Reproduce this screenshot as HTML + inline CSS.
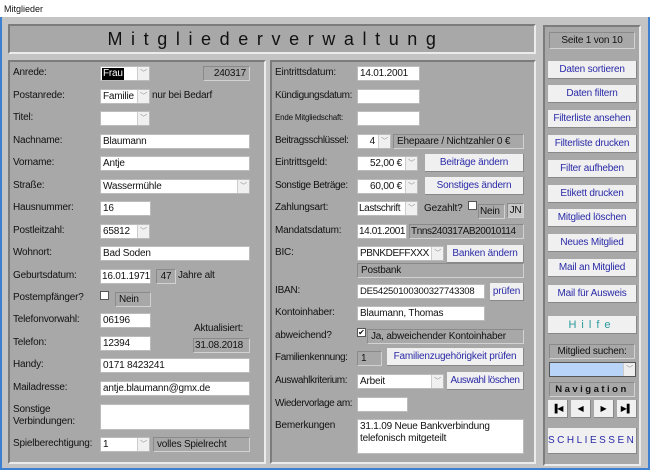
<!DOCTYPE html>
<html><head><meta charset="utf-8"><style>
*{box-sizing:border-box;margin:0;padding:0}
body{width:650px;height:470px;overflow:hidden;background:#c4c4c4;font-family:"Liberation Sans",sans-serif;font-size:10px;color:#111;position:relative}
div,span{position:absolute}
.tb{left:0;top:0;width:650px;height:17px;background:#fff;font-size:9px;padding:4px 0 0 4px}
.bl{left:0;top:17px;width:2px;height:453px;background:#3d7fd0}
.br{left:648px;top:17px;width:2px;height:453px;background:#3d7fd0}
.bb{left:0;top:468px;width:650px;height:2px;background:#3d7fd0}
.p{background:#a8a8a8;border-top:2px solid #7c7c7c;border-left:2px solid #7c7c7c;border-right:2px solid #ececec;border-bottom:2px solid #ececec}
.l{white-space:nowrap;line-height:12px;letter-spacing:-0.2px}
.f{background:#fff;height:15px;line-height:14px;padding-left:2px;white-space:nowrap;overflow:hidden;border:1px solid #bbb;letter-spacing:-0.2px}
.g{background:#a8a8a8;height:15px;line-height:13px;padding-left:3px;border:1px solid #d2d2d2;border-top-color:#8a8a8a;border-left-color:#8a8a8a;white-space:nowrap;overflow:hidden;letter-spacing:-0.2px}
.d{width:12px;height:13px;top:0;right:0;background:#f0f0f0;border-left:1px solid #ccc;color:#888;font-size:7px;text-align:center;line-height:13px}
.b{background:#f0f0f0;height:18px;line-height:18px;text-align:center;color:#2a2aa8;border-bottom:1px solid #888;border-right:1px solid #888;white-space:nowrap;font-size:10px;letter-spacing:-0.2px}
.cb{width:9px;height:9px;background:#fff;border:1px solid #555}
</style></head><body>
<div class="tb">Mitglieder</div>
<div class="bl"></div><div class="br"></div><div class="bb"></div>

<div class="p" style="left:8px;top:24px;width:528px;height:30px;font-size:18px;letter-spacing:8.6px;text-align:center;line-height:26px;padding-left:8px">Mitgliederverwaltung</div>

<!-- left panel -->
<div class="p" style="left:8px;top:60px;width:258px;height:404px"></div>
<div class="l" style="left:13px;top:67px">Anrede:</div>
<div class="f" style="left:100px;top:66px;width:50px"><span style="left:1px;top:1px;background:#000;color:#fff;line-height:12px;padding:0 1px">Frau</span><div class="d">﹀</div></div>
<div class="g" style="left:203px;top:66px;width:47px;text-align:right;padding-right:3px">240317</div>
<div class="l" style="left:13px;top:90px">Postanrede:</div>
<div class="f" style="left:100px;top:89px;width:50px">Familie<div class="d">﹀</div></div>
<div class="l" style="left:152px;top:90px">nur bei Bedarf</div>
<div class="l" style="left:13px;top:112px">Titel:</div>
<div class="f" style="left:100px;top:111px;width:50px"><div class="d">﹀</div></div>
<div class="l" style="left:13px;top:135px">Nachname:</div>
<div class="f" style="left:100px;top:134px;width:150px">Blaumann</div>
<div class="l" style="left:13px;top:157px">Vorname:</div>
<div class="f" style="left:100px;top:156px;width:150px">Antje</div>
<div class="l" style="left:13px;top:180px">Straße:</div>
<div class="f" style="left:100px;top:179px;width:150px">Wassermühle<div class="d">﹀</div></div>
<div class="l" style="left:13px;top:202px">Hausnummer:</div>
<div class="f" style="left:100px;top:201px;width:51px">16</div>
<div class="l" style="left:13px;top:225px">Postleitzahl:</div>
<div class="f" style="left:100px;top:224px;width:50px">65812<div class="d">﹀</div></div>
<div class="l" style="left:13px;top:247px">Wohnort:</div>
<div class="f" style="left:100px;top:246px;width:150px">Bad Soden</div>
<div class="l" style="left:13px;top:270px">Geburtsdatum:</div>
<div class="f" style="left:100px;top:269px;width:51px;padding-left:1px">16.01.1971</div>
<div class="g" style="left:156px;top:269px;width:20px;text-align:center;padding:0">47</div>
<div class="l" style="left:178px;top:270px">Jahre alt</div>
<div class="l" style="left:13px;top:292px">Postempfänger?</div>
<div class="cb" style="left:100px;top:291px"></div>
<div class="g" style="left:115px;top:292px;width:36px">Nein</div>
<div class="l" style="left:13px;top:314px">Telefonvorwahl:</div>
<div class="f" style="left:100px;top:313px;width:51px">06196</div>
<div class="l" style="left:194px;top:323px">Aktualisiert:</div>
<div class="l" style="left:13px;top:337px">Telefon:</div>
<div class="f" style="left:100px;top:336px;width:51px">12394</div>
<div class="g" style="left:193px;top:338px;width:57px;padding-left:1px">31.08.2018</div>
<div class="l" style="left:13px;top:359px">Handy:</div>
<div class="f" style="left:100px;top:358px;width:150px">0171 8423241</div>
<div class="l" style="left:13px;top:382px">Mailadresse:</div>
<div class="f" style="left:100px;top:381px;width:150px">antje.blaumann@gmx.de</div>
<div class="l" style="left:13px;top:404px">Sonstige<br>Verbindungen:</div>
<div class="f" style="left:100px;top:404px;width:150px;height:26px"></div>
<div class="l" style="left:13px;top:438px">Spielberechtigung:</div>
<div class="f" style="left:100px;top:437px;width:50px">1<div class="d">﹀</div></div>
<div class="g" style="left:153px;top:437px;width:97px">volles Spielrecht</div>

<!-- middle panel -->
<div class="p" style="left:270px;top:60px;width:266px;height:404px"></div>
<div class="l" style="left:275px;top:67px">Eintrittsdatum:</div>
<div class="f" style="left:357px;top:66px;width:63px">14.01.2001</div>
<div class="l" style="left:275px;top:90px;letter-spacing:-0.4px">Kündigungsdatum:</div>
<div class="f" style="left:357px;top:89px;width:63px"></div>
<div class="l" style="left:275px;top:112px;font-size:8px">Ende Mitgliedschaft:</div>
<div class="f" style="left:357px;top:111px;width:63px"></div>
<div class="l" style="left:275px;top:135px;letter-spacing:-0.4px">Beitragsschlüssel:</div>
<div class="f" style="left:357px;top:134px;width:34px;text-align:right;padding-right:15px">4<div class="d">﹀</div></div>
<div class="g" style="left:393px;top:134px;width:131px">Ehepaare / Nichtzahler 0 €</div>
<div class="l" style="left:275px;top:157px">Eintrittsgeld:</div>
<div class="f" style="left:357px;top:156px;width:61px;text-align:right;padding-right:15px">52,00 €<div class="d">﹀</div></div>
<div class="b" style="left:425px;top:154px;width:99px">Beiträge ändern</div>
<div class="l" style="left:275px;top:180px;letter-spacing:-0.4px">Sonstige Beträge:</div>
<div class="f" style="left:357px;top:179px;width:61px;text-align:right;padding-right:15px">60,00 €<div class="d">﹀</div></div>
<div class="b" style="left:425px;top:177px;width:99px">Sonstiges ändern</div>
<div class="l" style="left:275px;top:202px">Zahlungsart:</div>
<div class="f" style="left:357px;top:201px;width:61px;padding-left:1px;letter-spacing:-0.4px">Lastschrift<div class="d">﹀</div></div>
<div class="l" style="left:424px;top:203px">Gezahlt?</div>
<div class="cb" style="left:468px;top:201px"></div>
<div class="g" style="left:478px;top:204px;width:27px;padding-left:1px">Nein</div>
<div class="g" style="left:507px;top:203px;width:17px;background:#c8c8c8;padding:0;text-align:center">JN</div>
<div class="l" style="left:275px;top:225px">Mandatsdatum:</div>
<div class="f" style="left:357px;top:224px;width:50px;padding-left:1px;letter-spacing:-0.4px">14.01.2001</div>
<div class="g" style="left:409px;top:224px;width:115px;padding-left:1px;letter-spacing:-0.4px">Tnns240317AB20010114</div>
<div class="l" style="left:275px;top:247px">BIC:</div>
<div class="f" style="left:357px;top:246px;width:87px;letter-spacing:-0.4px">PBNKDEFFXXX<div class="d">﹀</div></div>
<div class="b" style="left:447px;top:245px;width:77px">Banken ändern</div>
<div class="g" style="left:357px;top:263px;width:167px">Postbank</div>
<div class="l" style="left:275px;top:285px">IBAN:</div>
<div class="f" style="left:357px;top:284px;width:128px;font-size:9.5px">DE54250100300327743308</div>
<div class="b" style="left:490px;top:283px;width:34px">prüfen</div>
<div class="l" style="left:275px;top:307px">Kontoinhaber:</div>
<div class="f" style="left:357px;top:306px;width:128px">Blaumann, Thomas</div>
<div class="l" style="left:275px;top:330px">abweichend?</div>
<div class="cb" style="left:357px;top:328px;font-size:8px;line-height:7px;text-align:center">✔</div>
<div class="g" style="left:367px;top:329px;width:157px">Ja, abweichender Kontoinhaber</div>
<div class="l" style="left:275px;top:352px;letter-spacing:-0.4px">Familienkennung:</div>
<div class="g" style="left:357px;top:351px;width:25px">1</div>
<div class="b" style="left:387px;top:348px;width:137px">Familienzugehörigkeit prüfen</div>
<div class="l" style="left:275px;top:375px;letter-spacing:-0.4px">Auswahlkriterium:</div>
<div class="f" style="left:357px;top:374px;width:87px">Arbeit<div class="d">﹀</div></div>
<div class="b" style="left:447px;top:372px;width:77px;letter-spacing:-0.4px">Auswahl löschen</div>
<div class="l" style="left:275px;top:398px;letter-spacing:-0.4px">Wiedervorlage am:</div>
<div class="f" style="left:357px;top:397px;width:51px"></div>
<div class="l" style="left:275px;top:420px">Bemerkungen</div>
<div class="f" style="left:357px;top:419px;width:167px;height:35px;white-space:normal;line-height:12px;padding-top:1px">31.1.09 Neue Bankverbindung telefonisch mitgeteilt</div>

<!-- right panel -->
<div class="p" style="left:543px;top:25px;width:98px;height:441px"></div>
<div class="g" style="left:549px;top:32px;width:86px;height:17px;text-align:center;padding:0;line-height:15px;font-size:10px">Seite 1 von 10</div>
<div class="b" style="left:548px;top:61px;width:89px">Daten sortieren</div>
<div class="b" style="left:548px;top:85px;width:89px">Daten filtern</div>
<div class="b" style="left:548px;top:110px;width:89px">Filterliste ansehen</div>
<div class="b" style="left:548px;top:135px;width:89px">Filterliste drucken</div>
<div class="b" style="left:548px;top:160px;width:89px">Filter aufheben</div>
<div class="b" style="left:548px;top:185px;width:89px">Etikett drucken</div>
<div class="b" style="left:548px;top:209px;width:89px">Mitglied löschen</div>
<div class="b" style="left:548px;top:234px;width:89px">Neues Mitglied</div>
<div class="b" style="left:548px;top:259px;width:89px">Mail an Mitglied</div>
<div class="b" style="left:548px;top:285px;width:89px">Mail für Ausweis</div>
<div class="b" style="left:548px;top:316px;width:89px;color:#2a9a9a;letter-spacing:5px;font-size:11px">Hilfe</div>
<div class="g" style="left:549px;top:344px;width:86px;text-align:center;padding:0;font-size:10px">Mitglied suchen:</div>
<div class="f" style="left:549px;top:362px;width:87px;background:#b8d4f8;border-color:#555"><div class="d" style="background:#eee">﹀</div></div>
<div class="g" style="left:549px;top:382px;width:86px;text-align:center;padding:0;letter-spacing:2.5px;font-weight:bold;font-size:9.5px">Navigation</div>
<div class="b" style="left:548px;top:400px;width:20px;color:#000;font-size:8px">▐◀</div>
<div class="b" style="left:571px;top:400px;width:20px;color:#000;font-size:8px">◀</div>
<div class="b" style="left:594px;top:400px;width:20px;color:#000;font-size:8px">▶</div>
<div class="b" style="left:617px;top:400px;width:20px;color:#000;font-size:8px">▶▌</div>
<div class="b" style="left:548px;top:428px;width:89px;height:26px;line-height:26px;letter-spacing:2.5px">SCHLIESSEN</div>
</body></html>
